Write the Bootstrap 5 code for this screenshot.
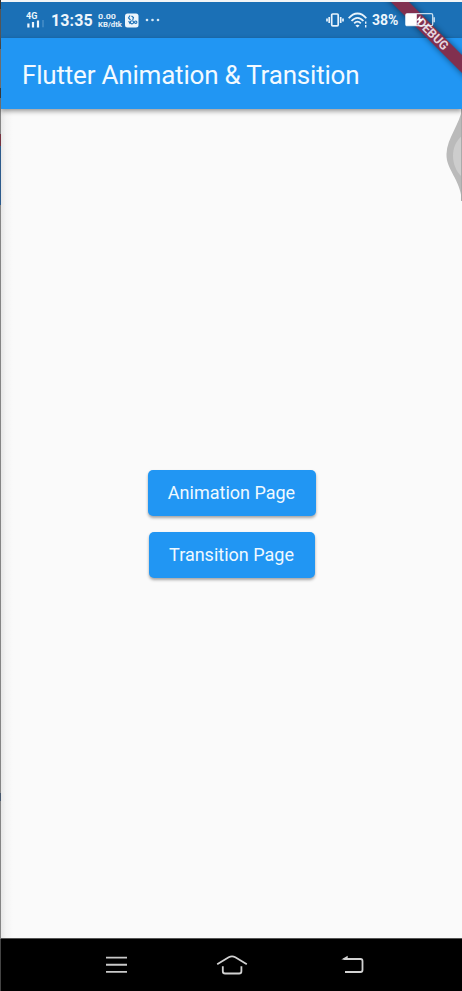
<!DOCTYPE html>
<html lang="en">
<head>
<meta charset="utf-8">
<meta name="viewport" content="width=device-width, initial-scale=1">
<title>Flutter Animation &amp; Transition</title>
<link href="https://cdn.jsdelivr.net/npm/bootstrap@5.3.0/dist/css/bootstrap.min.css" rel="stylesheet">
<style>
body{font-family:Roboto,sans-serif;background:#fafafa;overflow:hidden}
svg{display:block;flex:none}
.phone{height:991px;border-left:1px solid #858585;border-image:linear-gradient(#333 0 10px,#555 10px 50px,#858585 50px 89px,#444 89px 99px,#858585 99px 135px,#75323f 135px 147px,#2c5b8c 147px 206px,#858585 206px 792px,#46566c 792px 800px,#858585 800px 938px,#444 938px) 1}
.status-bar{height:38px;border-top:2px solid #f3f5f6;background:#1b70b6;color:#eef6fc;padding:0 26px 0 25px}
.status-bar .icons-end{position:relative;z-index:4}
.clock{font-size:16px;line-height:16px;font-weight:700;width:42px;margin-left:7px;margin-top:2px;letter-spacing:.1px}
.rate{width:25px;margin-left:5px}
.app-icon{margin-left:2px}
.battery-text{font-size:14px;line-height:16px;font-weight:700;width:29px;margin-left:4px;white-space:nowrap}
.app-bar{height:71px;background:#2196f3;box-shadow:0 2px 5px rgba(0,0,0,.42);padding:2px 0 0 21px;z-index:1}
.app-title{font-size:26px;line-height:32px;font-weight:400;letter-spacing:-.2px;color:#f3faff;white-space:nowrap}
.screen{background:linear-gradient(90deg,#e7e7e7,#f4f4f4 5px,#fafafa 12px);padding:1px 0 0}
.btn-page{--bs-btn-bg:#2196f3;--bs-btn-color:#eff9ff;--bs-btn-border-width:0;--bs-btn-hover-bg:#1e88e5;--bs-btn-hover-color:#fff;--bs-btn-border-radius:5px;height:46px;font-size:18px;line-height:22px;padding:0;box-shadow:0 2px 3px rgba(0,0,0,.34);white-space:nowrap}
.page-a{width:168px}
.page-t{width:166px}
.nav-keys{height:53px;background:#000;border-top:1px solid #555;padding:0 97px 0 104px}
.home-key{margin-right:6px}
.ribbon{z-index:3}
.assist{top:109px;z-index:0}
</style>
<script src="https://cdn.jsdelivr.net/npm/bootstrap@5.3.0/dist/js/bootstrap.bundle.min.js" defer></script>
</head>
<body>
<div class="phone d-flex flex-column position-relative">
  <header class="status-bar d-flex align-items-center justify-content-between">
    <div class="d-flex align-items-center">
      <svg width="18" height="18" viewBox="0 0 18 18"><text x="0" y="7.5" font-size="9" font-weight="700" fill="#eef6fc">4G</text><path d="M2.4 12.5v4M7 11v5.5M12 9.5v7" stroke="#eef6fc" stroke-width="2.2"/><path d="M17 9v7.3" stroke="#4b91c9" stroke-width="1.4"/></svg>
      <span class="clock">13:35</span>
      <svg class="rate" width="25" height="17" viewBox="0 0 25 17" fill="#e6f1fa" font-weight="700"><text x="0" y="7.3" font-size="8" textLength="18" lengthAdjust="spacingAndGlyphs">0.00</text><text x="0" y="15.3" font-size="7.5" textLength="24" lengthAdjust="spacingAndGlyphs">KB/dtk</text></svg>
      <svg class="app-icon" width="15" height="15" viewBox="0 0 15 15"><rect x="0" y=".5" width="13.5" height="14" rx="2.5" fill="#edf6fc"/><g fill="none" stroke="#1b70b6" stroke-width="1.1"><path d="M5 2.5 3.5 5l2 2M6.5 3l2 1.5-.8 2.5M3.7 8l1.5 3"/><circle cx="7" cy="9.3" r="1.6"/><circle cx="10.7" cy="9.2" r="1.2"/></g></svg>
      <svg class="ms-1" width="17" height="4" viewBox="0 0 17 4"><g fill="#d9e9f6"><circle cx="3" cy="2" r="1.3"/><circle cx="8.5" cy="2" r="1.3"/><circle cx="14" cy="2" r="1.3"/></g></svg>
    </div>
    <div class="icons-end d-flex align-items-center">
      <svg width="18" height="16" viewBox="0 0 18 16" fill="none" stroke="#e8f3fb" stroke-width="1.7"><rect x="5.7" y="2" width="6.5" height="11.8" rx="1"/><path d="M3.2 5v6M1 6.5v3M14.7 5v6M17 6.5v3"/></svg>
      <svg class="ms-1" width="20" height="17" viewBox="0 0 20 17" fill="none" stroke="#e8f3fb" stroke-width="1.8"><path d="M.7 6.3C6-.1 13-.1 18.3 6.3M3.5 9C7.3 4.7 11.7 4.7 15.4 9M6.2 11.4c2-2.3 4.6-2.3 6.6 0"/><path d="M7.4 13.5q2-1.7 4.2 0l-2.1 2z" fill="#e8f3fb" stroke="none"/><path d="M17.7 9.5v2.3M17.7 13v2.5" stroke-width="1.4"/></svg>
      <span class="battery-text">38%</span>
      <svg class="ms-1" width="31" height="14" viewBox="0 0 31 14"><rect x=".7" y=".7" width="27" height="12" rx="1.5" fill="none" stroke="#e8f3fb" stroke-width="1.3" opacity=".85"/><path d="M1 1h10.8v11.5H1z" fill="#fff"/><path d="M28.5 4.2h1.3v5h-1.3z" fill="#e8f3fb"/><path d="M15.5 2.5 11 7.4h3.2L13 11l5.5-5h-3.2z" fill="#fff"/></svg>
    </div>
  </header>
  <div class="app-bar d-flex align-items-center"><h1 class="app-title mb-0">Flutter Animation &amp; Transition</h1></div>
  <main class="screen flex-grow-1 d-flex flex-column align-items-center justify-content-center gap-3">
    <button class="btn btn-page page-a" type="button">Animation Page</button>
    <button class="btn btn-page page-t" type="button">Transition Page</button>
  </main>
  <nav class="nav-keys d-flex align-items-center justify-content-between">
    <svg width="23" height="20" viewBox="0 0 23 20" stroke="#c9c9c9" stroke-width="1.9"><path d="M1 2.6h21M1 9.7h21M1 16.9h21"/></svg>
    <svg class="home-key" width="32" height="22" viewBox="0 0 32 22" fill="none" stroke="#d2d2d2" stroke-width="1.8"><path d="m1.2 10.2 11.5-7q3.3-1.8 6.6 0l11.5 7M6.8 12.2v5q0 2.3 2.3 2.3h14q2.3 0 2.3-2.3v-5"/></svg>
    <svg width="24" height="20" viewBox="0 0 24 20" fill="none" stroke="#d2d2d2" stroke-width="1.8"><path d="M2.5 4h17q2 0 2 2v9q0 2-2 2H4"/><path d="M.3 4.6 6.7.8v3.8z" fill="#d2d2d2" stroke="none"/></svg>
  </nav>
  <svg class="assist position-absolute end-0" width="17" height="92" viewBox="0 0 17 92"><path d="M17 0C15 15 2 29 1.5 45S15 69 17 92z" fill="#bababa"/><path d="M17 27C5 36 5 57 17 68z" fill="#cdcdcd"/><path d="M16.5 0v92" stroke="#aaa"/></svg>
  <svg class="ribbon position-absolute top-0 end-0" width="84" height="84" viewBox="378 0 84 84"><defs><filter id="soft" x="-20%" y="-20%" width="140%" height="140%"><feGaussianBlur stdDeviation="3"/></filter><clipPath id="edge"><path d="M370 2h92v90h-92z"/></clipPath></defs><g clip-path="url(#edge)"><path d="M379-10h18l80 80v18z" fill="#000" opacity=".5" filter="url(#soft)"/><path d="M379-10h18l80 80v18z" fill="#81304f"/></g></svg>
  <svg class="position-absolute top-0 end-0 z-3 debug-label" width="62" height="62" viewBox="400 0 62 62"><text transform="translate(432.8 34) rotate(45)" x="0" y="4.4" text-anchor="middle" font-size="12.5" font-weight="700" fill="#e6d5de" textLength="39" lengthAdjust="spacingAndGlyphs">DEBUG</text></svg>
</div>
</body>
</html>
